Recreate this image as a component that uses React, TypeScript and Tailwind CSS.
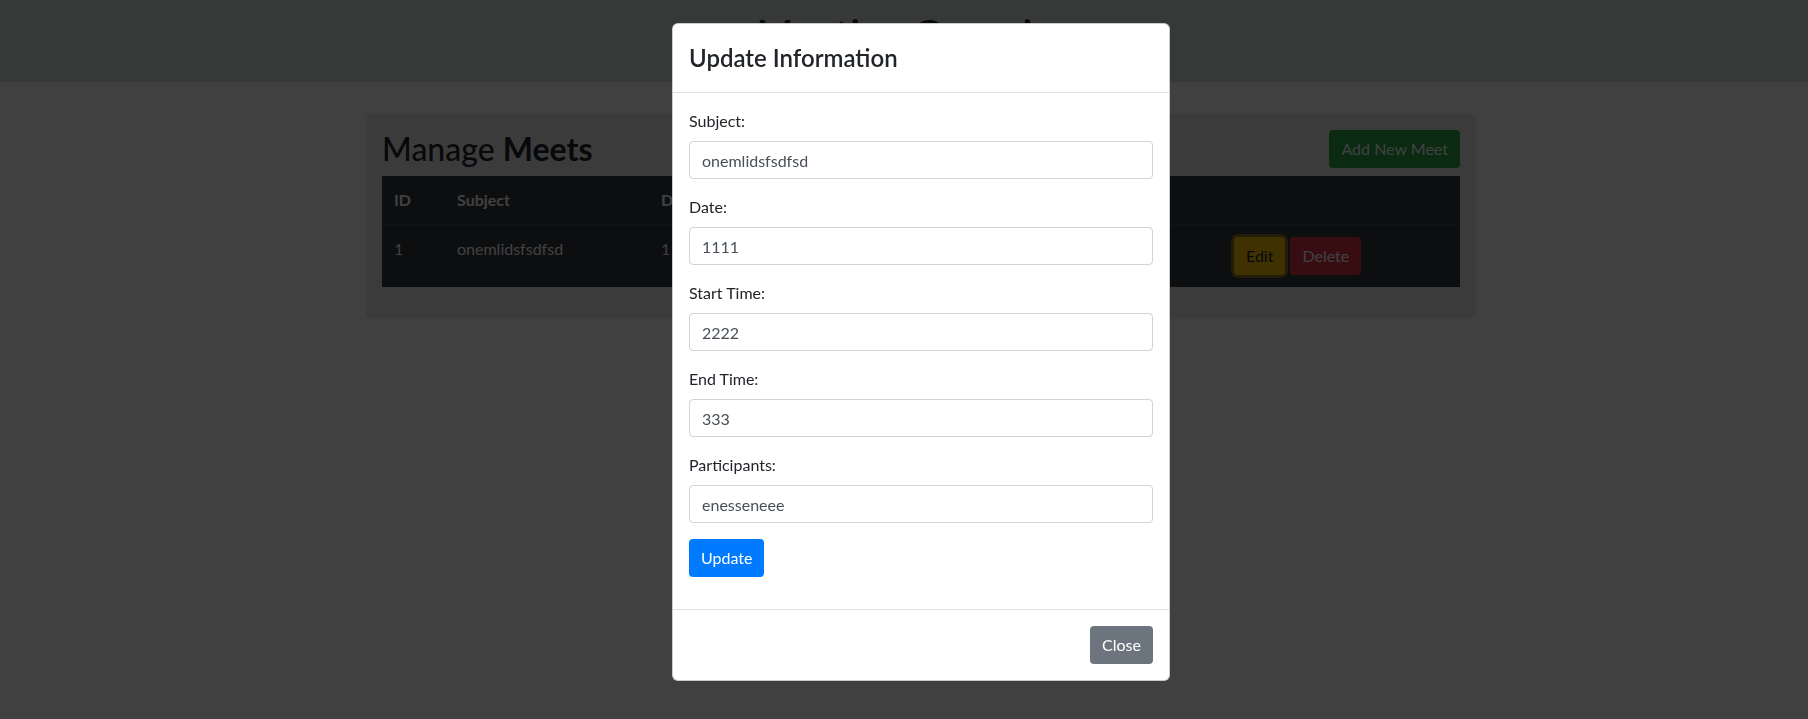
import React from "react"

const meets = [
  { id: 1, subject: "onemlidsfsdfsd", date: "1111", start: "2222", end: "333", participants: "enesseneee" },
]

function Field({ label, value }: { label: string; value: string }) {
  return (
    <div className="mb-4">
      <label className="mb-2 block text-base leading-6 text-[#212529]">{label}</label>
      <input
        defaultValue={value}
        className="block h-[38px] w-full rounded border border-[#ced4da] bg-white px-3 text-base text-[#495057] outline-none"
      />
    </div>
  )
}

export default function App() {
  return (
    <div className="relative min-h-screen bg-white font-[Lato,sans-serif] text-[#212529]">
      {/* Page header */}
      <header className="h-[82px] bg-[#dadde0] pt-[10px]">
        <div className="ml-[366px] w-[1110px] text-center">
          <h1 className="text-[40px] font-medium leading-[48px] text-[#212529]">Meeting Organizer</h1>
        </div>
      </header>

      {/* Manage meets card */}
      <main className="ml-[366px] mt-8 w-[1110px] rounded-md bg-[#e9ecef] p-4">
        <div className="mb-2 flex items-center justify-between">
          <h2 className="text-[32px] font-medium leading-[38px]">
            Manage <strong className="font-bold">Meets</strong>
          </h2>
          <button className="h-[38px] rounded bg-[#28a745] px-3 text-base text-white">Add New Meet</button>
        </div>
        <table className="mb-4 w-full table-fixed bg-[#343a40] text-left text-base text-white">
          <thead>
            <tr className="border-b border-[#454d55]">
              <th className="w-[63px] px-3 py-3 font-bold">ID</th>
              <th className="w-[204px] px-3 py-3 font-bold">Subject</th>
              <th className="w-[130px] px-3 py-3 font-bold">Date</th>
              <th className="w-[130px] px-3 py-3 font-bold">Start Time</th>
              <th className="w-[130px] px-3 py-3 font-bold">End Time</th>
              <th className="w-[183px] px-3 py-3 font-bold">Participants</th>
              <th className="px-3 py-3 font-bold"></th>
            </tr>
          </thead>
          <tbody>
            {meets.map((m) => (
              <tr key={m.id}>
                <td className="px-3 py-3 align-top">{m.id}</td>
                <td className="px-3 py-3 align-top">{m.subject}</td>
                <td className="px-3 py-3 align-top">{m.date}</td>
                <td className="px-3 py-3 align-top">{m.start}</td>
                <td className="px-3 py-3 align-top">{m.end}</td>
                <td className="px-3 py-3 align-top">{m.participants}</td>
                <td className="px-3 py-3 align-top">
                  <div className="flex gap-[5px]">
                    <button className="h-[38px] rounded bg-[#ffc107] px-3 text-[#212529] ring-[3px] ring-[#deaa0c80]">Edit</button>
                    <button className="h-[38px] rounded bg-[#dc3545] px-3 text-white">Delete</button>
                  </div>
                </td>
              </tr>
            ))}
          </tbody>
        </table>
      </main>

      {/* Modal backdrop + dialog */}
      <div className="fixed inset-0 bg-black/[0.75]" />
      <div className="fixed inset-0 overflow-y-auto">
        <div className="ml-[672px] mt-[23px] w-[498px] rounded-md border border-black/20 bg-white">
          <div className="border-b border-[#dee2e6] px-4 py-4">
            <h4 className="text-2xl font-semibold leading-9 text-[#212529]">Update Information</h4>
          </div>
          <div className="p-4">
            <form>
              <Field label="Subject:" value="onemlidsfsdfsd" />
              <Field label="Date:" value="1111" />
              <Field label="Start Time:" value="2222" />
              <Field label="End Time:" value="333" />
              <Field label="Participants:" value="enesseneee" />
              <button type="button" className="mb-4 h-[38px] rounded bg-[#007bff] px-3 text-base text-white">
                Update
              </button>
            </form>
          </div>
          <div className="flex justify-end border-t border-[#dee2e6] p-3">
            <button className="m-1 h-[38px] rounded bg-[#6c757d] px-3 text-base text-white">Close</button>
          </div>
        </div>
      </div>
    </div>
  )
}
